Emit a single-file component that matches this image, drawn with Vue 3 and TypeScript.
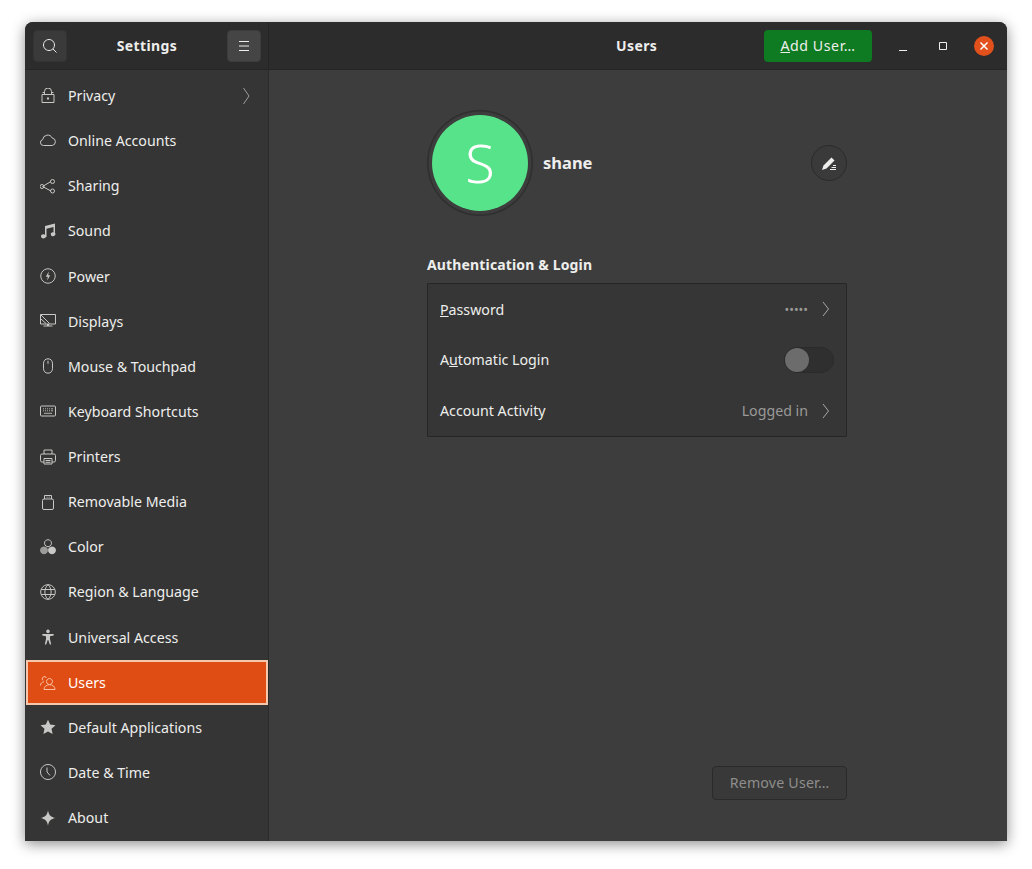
<script setup lang="ts">
interface Shape { d: string; fill?: boolean; o?: number }
interface Item { label: string; icon: Shape[]; active?: boolean; chevron?: boolean }

const items: Item[] = [
  { label: 'Privacy', chevron: true, icon: [
    { d: 'M2 6.500h12v8H2z' },
    { d: 'M4.500 6.500V3.500a3.500 3.500 0 0 1 7 0v3' },
    { d: 'M2.500 4.500h2M11.500 4.500h2' },
    { d: 'M8 9.300a1.200 1.200 0 1 1-.01 0z', fill: true },
  ] },
  { label: 'Online Accounts', icon: [
    { d: 'M3.500 12.500a3 3 0 0 1-.8-5.900A5 5 0 0 1 12.200 5a3.800 3.800 0 0 1 0 7.500z' },
  ] },
  { label: 'Sharing', icon: [
    { d: 'M2.500 8.500l8.500-5M2.500 8.500l8.500 4.500' },
    { d: 'M4 8.500a2 2 0 1 1-4 0 2 2 0 0 1 4 0zM14.500 3.500a2 2 0 1 1-4 0 2 2 0 0 1 4 0zM14.500 13a2 2 0 1 1-4 0 2 2 0 0 1 4 0z' },
  ] },
  { label: 'Sound', icon: [
    { d: 'M5 3l10-2.500v11h-1.500V4L6.500 5.700v8.300H5z', fill: true },
    { d: 'M3.300 11.300c1.400 0 2.900.8 2.900 1.900s-1.500 2.300-2.900 2.300S1 14.500 1 13.300s.9-2 2.300-2zM13 9.300c1.300 0 2.500.8 2.500 1.800s-1.200 2.200-2.500 2.200-2.200-.9-2.200-2.100.9-1.900 2.200-1.900z', fill: true },
  ] },
  { label: 'Power', icon: [
    { d: 'M8 .8a7.200 7.200 0 1 1-.01 0z' },
    { d: 'M8.800 3.500L5.800 8.800h2L7.200 12.500l3-5.300h-2z', fill: true },
  ] },
  { label: 'Displays', icon: [
    { d: 'M.5 1.500h15v9.500H.5z' },
    { d: 'M1 2l8.500 8.500M1 6l5 4.500' },
    { d: 'M3.500 12.500h9v1h-9zM7 11h2v2H7z', fill: true },
  ] },
  { label: 'Mouse & Touchpad', icon: [
    { d: 'M8 .8c3 0 4.500 2 4.500 5v4.500c0 2.900-1.700 4.900-4.500 4.900s-4.500-2-4.500-4.900V5.800c0-3 1.500-5 4.500-5z' },
    { d: 'M8 2.800v3' },
  ] },
  { label: 'Keyboard Shortcuts', icon: [
    { d: 'M1.500 3h13a1 1 0 0 1 1 1v8a1 1 0 0 1-1 1h-13a1 1 0 0 1-1-1V4a1 1 0 0 1 1-1z' },
    { d: 'M3 5.800h1M5 5.800h1M7 5.800h1M9 5.800h1M11 5.800h2M3 7.800h1M5 7.800h1M7 7.800h1M9 7.800h1M11 7.800h2M4 10.300h8', o: 0.85 },
  ] },
  { label: 'Printers', icon: [
    { d: 'M4 5V1h8v4' },
    { d: 'M4 13H2a1.500 1.500 0 0 1-1.500-1.500V6.500A1.500 1.500 0 0 1 2 5h12a1.500 1.500 0 0 1 1.500 1.500v5A1.500 1.500 0 0 1 14 13h-2' },
    { d: 'M4 9.500h8v5.500H4zM5.500 11.500h5M5.500 13.300h5' },
  ] },
  { label: 'Removable Media', icon: [
    { d: 'M2.500 6.500a1.500 1.500 0 0 1 1.500-1.500h8a1.500 1.500 0 0 1 1.500 1.500v7.500a1.500 1.500 0 0 1-1.500 1.500H4a1.500 1.500 0 0 1-1.500-1.500z' },
    { d: 'M4.500 5V1.500h7V5M6.500 3.200h1M8.700 3.200h1' },
  ] },
  { label: 'Color', icon: [
    { d: 'M8 .7a3.500 3.500 0 1 1-.01 0z' },
    { d: 'M4 7.400a3.900 3.900 0 1 1-.01 0z', fill: true, o: 0.7 },
    { d: 'M12 7.400a3.900 3.900 0 1 1-.01 0z', fill: true },
  ] },
  { label: 'Region & Language', icon: [
    { d: 'M8 .7a7.300 7.300 0 1 1-.01 0z' },
    { d: 'M8 .7c-4.200 4-4.200 10.600 0 14.600 4.200-4 4.200-10.600 0-14.600zM1.200 5.500h13.600M1.200 10.500h13.600' },
  ] },
  { label: 'Universal Access', icon: [
    { d: 'M8 .5a1.800 1.800 0 1 1-.01 0z', fill: true },
    { d: 'M2.300 5h11.400v1.500L10 7.300V10l1.200 5.500H9.800L8.300 11h-.6L6.200 15.500H4.800L6 10V7.300l-3.700-.8z', fill: true },
  ] },
  { label: 'Users', active: true, icon: [
    { d: 'M9.500 4.500a3 3 0 1 1-.01 0z' },
    { d: 'M4 15.500c0-3 2.500-4.800 5.500-4.800s5.500 1.800 5.500 4.800z' },
    { d: 'M6.500 4a2.200 2.200 0 1 0-3.200 2.700M.5 11.500c0-2.300 1.500-3.500 3.500-3.700' },
  ] },
  { label: 'Default Applications', icon: [
    { d: 'M8 .7l2.200 4.900 5.300.6-4 3.600 1.100 5.300L8 12.400l-4.600 2.700 1.100-5.300-4-3.600 5.300-.6z', fill: true },
  ] },
  { label: 'Date & Time', icon: [
    { d: 'M8 .5a7.500 7.500 0 1 1-.01 0z' },
    { d: 'M7 3.500V8l3 3.500' },
  ] },
  { label: 'About', icon: [
    { d: 'M8 .5C8.800 5 11 7.200 15.500 8 11 8.800 8.800 11 8 15.500 7.200 11 5 8.800.5 8 5 7.200 7.200 5 8 .5z', fill: true },
  ] },
]
</script>

<template>
  <div class="page">
    <div class="window">
      <header class="titlebar">
        <div class="bar-left">
          <button class="tool-btn">
            <svg viewBox="0 0 16 16" width="16" height="16" class="ico">
              <path d="M7 1.500a5.500 5.500 0 1 1-.01 0zM11 11l3.500 3.500" />
            </svg>
          </button>
          <span class="bar-title">Settings</span>
          <button class="tool-btn tool-btn--on">
            <svg viewBox="0 0 16 16" width="16" height="16" class="ico">
              <path d="M3 3.500h10M3 8h10M3 12.500h10" />
            </svg>
          </button>
        </div>
        <div class="bar-right">
          <span class="bar-title bar-center">Users</span>
          <button class="add-btn"><u>A</u>dd User…</button>
          <div class="win-controls">
            <svg viewBox="0 0 16 16" width="16" height="16" class="ico">
              <path d="M4 12.500h8" />
            </svg>
            <svg viewBox="0 0 16 16" width="16" height="16" class="ico">
              <path d="M4.500 4.500h7v7h-7z" />
            </svg>
            <span class="close">
              <svg viewBox="0 0 20 20" width="20" height="20">
                <path d="M6.500 6.500l7 7M13.500 6.500l-7 7" stroke="#fff" stroke-width="1.500" fill="none" />
              </svg>
            </span>
          </div>
        </div>
      </header>

      <div class="body">
        <nav class="sidebar">
          <div v-for="item in items" :key="item.label" class="row" :class="{ active: item.active }">
            <svg viewBox="0 0 16 16" width="16" height="16" class="row-ico">
              <path
                v-for="(s, i) in item.icon"
                :key="i"
                :d="s.d"
                :class="{ solid: s.fill }"
                :opacity="s.o ?? 1"
              />
            </svg>
            <span class="row-label">{{ item.label }}</span>
            <svg v-if="item.chevron" class="row-chev" viewBox="0 0 8 18" width="8" height="18">
              <path d="M1.500 1L7 9l-5.500 8" />
            </svg>
          </div>
        </nav>

        <main class="main">
          <div class="column">
            <div class="profile">
              <div class="avatar"><span>S</span></div>
              <span class="name">shane</span>
              <button class="edit-btn">
                <svg viewBox="0 0 16 16" width="16" height="16">
                  <path d="M1 15l1.500-4.500L10.500 2.500l3 3-8 8z" fill="#eeeeec" />
                  <path d="M9 14.500h6M10.500 12.500h4.500M12 10.500h3" stroke="#eeeeec" stroke-width="1" fill="none" />
                </svg>
              </button>
            </div>

            <h2 class="section">Authentication &amp; Login</h2>

            <div class="card">
              <div class="card-row">
                <span><u>P</u>assword</span>
                <span class="value dots">•••••</span>
                <svg class="card-chev" viewBox="0 0 8 16" width="8" height="16">
                  <path d="M1 1l5.500 7L1 15" />
                </svg>
              </div>
              <div class="card-row">
                <span>A<u>u</u>tomatic Login</span>
                <span class="switch"><span class="knob"></span></span>
              </div>
              <div class="card-row">
                <span>Account Activity</span>
                <span class="value">Logged in</span>
                <svg class="card-chev" viewBox="0 0 8 16" width="8" height="16">
                  <path d="M1 1l5.500 7L1 15" />
                </svg>
              </div>
            </div>

            <button class="remove-btn">Remove User…</button>
          </div>
        </main>
      </div>
    </div>
  </div>
</template>

<style>
html, body { margin: 0; background: #fff; }
</style>

<style scoped>
.page {
  width: 1032px;
  height: 869px;
  box-sizing: border-box;
  padding: 22px 25px 28px;
  font-family: "Noto Sans", "Open Sans", sans-serif;
  font-size: 14.2px;
  color: #eeeeec;
  overflow: hidden;
}
.window {
  height: 100%;
  display: flex;
  flex-direction: column;
  border-radius: 8px 8px 0 0;
  overflow: hidden;
  box-shadow: 0 3px 14px rgba(0, 0, 0, 0.45);
  background: #3d3d3d;
}
button { font: inherit; color: inherit; padding: 0; }
.titlebar {
  height: 48px;
  flex: none;
  display: flex;
  background: #2c2c2c;
  border-bottom: 1px solid #252525;
  box-sizing: border-box;
}
.bar-left {
  width: 244px;
  flex: none;
  box-sizing: border-box;
  padding: 0 7px 0 8px;
  display: flex;
  align-items: center;
  justify-content: space-between;
  border-right: 1px solid #242424;
}
.bar-title { font-weight: 700; font-size: 14px; letter-spacing: 0.4px; }
.tool-btn {
  width: 34px;
  height: 32px;
  border-radius: 4px;
  border: 1px solid #333;
  background: #3a3a3a;
  display: flex;
  align-items: center;
  justify-content: center;
}
.tool-btn--on { background: #454545; border-color: #3c3c3c; }
.ico path { fill: none; stroke: #eeeeec; stroke-width: 1; }
.bar-right {
  flex: 1;
  position: relative;
  display: flex;
  align-items: center;
  justify-content: flex-end;
  padding-right: 13px;
}
.bar-center {
  position: absolute;
  left: 347px;
  top: 14px;
}
.add-btn {
  width: 108px;
  height: 32px;
  border: none;
  border-radius: 4px;
  background: #0e7a22;
  margin-right: 23px;
  letter-spacing: 0.55px;
}
.win-controls { display: flex; align-items: center; gap: 24px; }
.close {
  width: 20px;
  height: 20px;
  margin-left: -1px;
  border-radius: 50%;
  background: #e2501c;
  display: block;
}
.close svg { display: block; }
.body { flex: 1; display: flex; min-height: 0; }
.sidebar {
  width: 244px;
  flex: none;
  box-sizing: border-box;
  background: #353535;
  border-right: 1px solid #2b2b2b;
  padding: 3px 0 0 1px;
}
.row {
  height: 45.13px;
  box-sizing: border-box;
  display: flex;
  align-items: center;
  padding-left: 14px;
  padding-right: 18px;
}
.row-ico { flex: none; margin-right: 12px; }
.row-ico path { fill: none; stroke: #c8c8c6; stroke-width: 1; }
.row-ico path.solid { fill: #c8c8c6; stroke: none; }
.row-label { flex: 1; }
.row-chev path { fill: none; stroke: #9c9c9a; stroke-width: 1; }
.row.active {
  background: #e04d14;
  outline: 2px solid #f5c7ad;
  outline-offset: -2px;
  width: 242px;
  color: #fff;
}
.row.active .row-ico path { stroke: #f9bfa0; }
.main { flex: 1; display: flex; justify-content: center; padding-right: 2px; }
.column {
  width: 420px;
  display: flex;
  flex-direction: column;
  padding-top: 41px;
  padding-bottom: 41px;
  box-sizing: border-box;
}
.profile { display: flex; align-items: center; height: 104px; }
.avatar {
  width: 96px;
  height: 96px;
  margin: 0 15px 0 5px;
  border-radius: 50%;
  background: #57e389;
  box-shadow: 0 0 0 3.500px #3d3d3d, 0 0 0 5px #2f2f2f;
  display: flex;
  align-items: center;
  justify-content: center;
  color: #fff;
  font-size: 54px;
  font-weight: 300;
  line-height: 1;
}
.avatar span { margin-top: -3px; }
.name { flex: 1; font-size: 16.500px; font-weight: 700; margin-bottom: 2px; }
.edit-btn {
  width: 36px;
  height: 36px;
  border-radius: 50%;
  background: #3a3a3a;
  border: 1px solid #2a2a2a;
  display: flex;
  align-items: center;
  justify-content: center;
}
.section {
  margin: 40px 0 9px;
  font-size: 14px;
  font-weight: 700;
  line-height: 19px;
  letter-spacing: 0.15px;
}
.card {
  border: 1px solid #262626;
  background: #363636;
  border-radius: 1px;
}
.card-row {
  height: 50.670px;
  display: flex;
  align-items: center;
  padding: 0 12px;
  gap: 0;
}
.card-row > span:first-child { flex: 1; }
.value { color: #9a9a98; margin-right: 14px; }
.dots { font-size: 12.500px; }
.card-chev { margin-right: 4px; }
.card-chev path { fill: none; stroke: #a8a8a6; stroke-width: 1; }
.switch {
  width: 50px;
  height: 26px;
  border-radius: 13px;
  background: #2f2f2f;
  border: 1px solid #2b2b2b;
  box-sizing: border-box;
  display: flex;
  align-items: center;
}
.knob {
  width: 24px;
  height: 24px;
  border-radius: 50%;
  background: #6c6c6c;
}
.remove-btn {
  margin-top: auto;
  align-self: flex-end;
  width: 135px;
  height: 34px;
  border-radius: 4px;
  border: 1px solid #2a2a2a;
  background: #393939;
  color: #8e8e8c;
  letter-spacing: 0.2px;
  padding-bottom: 2px;
}
</style>
